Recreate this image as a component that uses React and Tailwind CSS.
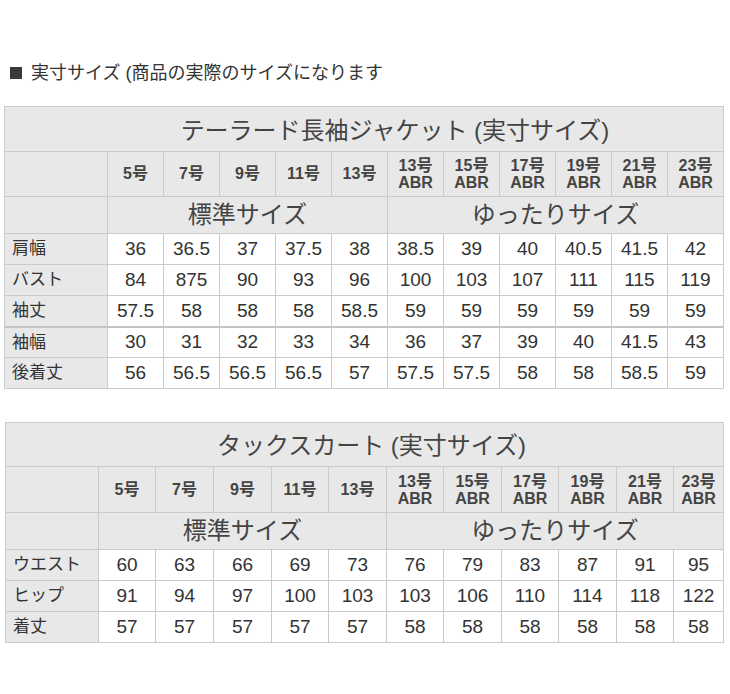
const FONT = 'font-["Liberation_Sans","Noto_Sans_CJK_JP",sans-serif]'

const STD = ['5号', '7号', '9号', '11号', '13号']
const ABR = ['13号', '15号', '17号', '19号', '21号', '23号']

const TABLES = [
  {
    title: 'テーラード長袖ジャケット (実寸サイズ)',
    titlePad: 'pl-[62px] pt-[4px]',
    cols: [103, 56, 56, 56, 56, 56, 56, 56, 56, 56, 56, 56],
    heights: ['h-[45px]', 'h-[45px]', 'h-[37px]', 'h-[31px]'],
    rows: [
      ['肩幅', '36', '36.5', '37', '37.5', '38', '38.5', '39', '40', '40.5', '41.5', '42'],
      ['バスト', '84', '875', '90', '93', '96', '100', '103', '107', '111', '115', '119'],
      ['袖丈', '57.5', '58', '58', '58', '58.5', '59', '59', '59', '59', '59', '59'],
      ['袖幅', '30', '31', '32', '33', '34', '36', '37', '39', '40', '41.5', '43'],
      ['後着丈', '56', '56.5', '56.5', '56.5', '57', '57.5', '57.5', '58', '58', '58.5', '59'],
    ],
    thickBefore: 3,
  },
  {
    title: 'タックスカート (実寸サイズ)',
    titlePad: 'pl-[14px] pt-[2px]',
    cols: [93, 57, 58, 58, 57, 58, 57, 58, 57, 58, 57, 50],
    heights: ['h-[44px]', 'h-[46px]', 'h-[36px]', 'h-[31px]'],
    rows: [
      ['ウエスト', '60', '63', '66', '69', '73', '76', '79', '83', '87', '91', '95'],
      ['ヒップ', '91', '94', '97', '100', '103', '103', '106', '110', '114', '118', '122'],
      ['着丈', '57', '57', '57', '57', '57', '58', '58', '58', '58', '58', '58'],
    ],
    thickBefore: -1,
  },
]

const cell = 'border border-[#cacaca]'

function SizeTable({ t }) {
  return (
    <table className="table-fixed border-collapse text-[#333]">
      <colgroup>
        {t.cols.map((w, i) => (
          <col key={i} style={{ width: w }} />
        ))}
      </colgroup>
      <tbody>
        {/* title */}
        <tr className={t.heights[0]}>
          <td colSpan={12} className={`${cell} ${t.titlePad} bg-[#e8e8e8] text-center text-[24px] text-[#444]`}>
            {t.title}
          </td>
        </tr>
        {/* sizes */}
        <tr className={t.heights[1]}>
          <td className={`${cell} bg-[#e8e8e8]`} />
          {STD.map(s => (
            <td key={s} className={`${cell} bg-[#e8e8e8] text-center text-[16px] font-bold text-[#444]`}>{s}</td>
          ))}
          {ABR.map(s => (
            <td key={s} className={`${cell} bg-[#e8e8e8] text-center text-[16px] font-bold leading-[17px] text-[#444]`}>
              {s}<br />ABR
            </td>
          ))}
        </tr>
        <tr className={t.heights[2]}>
          <td className={`${cell} bg-[#e8e8e8]`} />
          <td colSpan={5} className={`${cell} bg-[#e8e8e8] text-center text-[24px] text-[#444]`}>標準サイズ</td>
          <td colSpan={6} className={`${cell} bg-[#e8e8e8] text-center text-[24px] text-[#444]`}>ゆったりサイズ</td>
        </tr>
        {t.rows.map((r, ri) => (
          <tr key={r[0]} className={t.heights[3]}>
            {r.map((v, ci) => (
              <td
                key={ci}
                className={`${cell} ${ri === t.thickBefore ? 'border-t-2 border-t-[#c4c4c4]' : ''} ${
                  ci === 0 ? 'bg-[#e8e8e8] pl-[7px] text-left text-[17px]' : 'bg-white text-center text-[19px]'
                }`}
              >
                {v}
              </td>
            ))}
          </tr>
        ))}
      </tbody>
    </table>
  )
}

export default function App() {
  return (
    <div className={`${FONT} w-[730px] h-[694px] bg-white`}>
      <div className="pt-[63px] pl-[10px] flex items-center gap-[9px] text-[18px] text-[#333] leading-[20px]">
        <span className="w-[12px] h-[12px] bg-[#3a3a3a]" />
        <span>実寸サイズ (商品の実際のサイズになります</span>
      </div>
      <div className="mt-[23px] ml-[4px]">
        <SizeTable t={TABLES[0]} />
      </div>
      <div className="mt-[33px] ml-[5px]">
        <SizeTable t={TABLES[1]} />
      </div>
    </div>
  )
}
